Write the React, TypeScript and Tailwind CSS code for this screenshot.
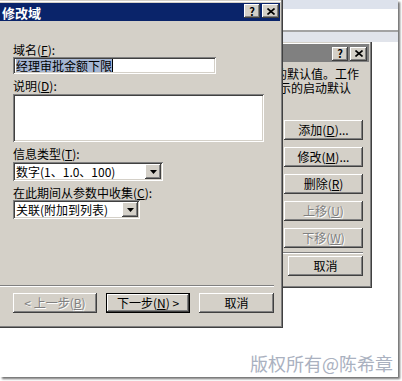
import React from 'react';

const raised =
    'bg-[#d4d0c8] shadow-[inset_-1px_-1px_#404040,inset_1px_1px_#ffffff,inset_-2px_-2px_#808080,inset_2px_2px_#d4d0c8]';
const sunken =
    'bg-white shadow-[inset_1px_1px_#808080,inset_-1px_-1px_#ffffff,inset_2px_2px_#404040,inset_-2px_-2px_#d4d0c8]';
const disabledText = 'text-[#808080] [text-shadow:1px_1px_#ffffff]';

const CaptionButtons: React.FC = () => (
    <div className="flex items-center gap-[2px] mt-[1px]">
        <div className={`${raised} w-[16px] h-[14px] flex items-center justify-center text-[11px] font-bold leading-none text-black`}>?</div>
        <div className={`${raised} w-[17px] h-[14px] flex items-center justify-center`}>
            <svg width="8" height="7" viewBox="0 0 8 7">
                <path d="M0.5 0.5L7.5 6.5M7.5 0.5L0.5 6.5" stroke="#000" strokeWidth="1.6" />
            </svg>
        </div>
    </div>
);

const Button: React.FC<{ children: React.ReactNode; w: string; disabled?: boolean; isDefault?: boolean }> = ({ children, w, disabled, isDefault }) => (
    <div
        className={`${w} h-[20px] flex items-center justify-center text-[12px] leading-none ${isDefault ? 'border border-black' : ''} ${
            disabled ? disabledText : 'text-black'
        } ${raised}`}
    >
        {children}
    </div>
);

const Combo: React.FC<{ text: string; w: string }> = ({ text, w }) => (
    <div className={`${sunken} ${w} h-[19px] flex items-center pl-[3px] pr-[2px]`}>
        <span className="flex-1 text-[12px] leading-none text-black whitespace-nowrap">{text}</span>
        <div className={`${raised} w-[16px] h-[15px] flex items-center justify-center`}>
            <svg width="7" height="4" viewBox="0 0 7 4">
                <path d="M0 0H7L3.5 4Z" fill="#000" />
            </svg>
        </div>
    </div>
);

const App: React.FC = () => {
    return (
        <div className="w-[402px] h-[381px] bg-white font-['Noto_Sans_CJK_SC','Noto_Sans',sans-serif]">
            <div className="relative w-[398px] h-[377px] overflow-hidden bg-white shadow-[2px_2px_2px_rgba(0,0,0,0.55)]">
                {/* window in the background */}
                <div className="absolute left-[283px] top-0 w-[115px] flex flex-col">
                    <div className="h-[9px] bg-[#dde2ec]" />
                    <div className="h-[21px] bg-white" />
                    <div className="h-[2px] bg-[#a3a3a3]" />
                    <div className="h-[10px] bg-[#e1e4eb]" />
                </div>

                {/* second dialog, behind */}
                <div className="absolute left-[200px] top-[42px] w-[172px] h-[246px] bg-[#d4d0c8] flex flex-col pt-[2px] pr-[3px] shadow-[inset_-1px_-1px_#404040,inset_-2px_-2px_#808080,inset_0_1px_#d4d0c8,inset_0_2px_#ffffff]">
                    <div className="h-[18px] bg-[#808080] flex justify-end pr-[2px]">
                        <CaptionButtons />
                    </div>
                    <p className="mt-[6px] pl-[51px] text-[12px] leading-[14px] text-black whitespace-nowrap font-['Liberation_Sans','Noto_Sans_CJK_SC',sans-serif]">
                        参数的默认值。工作
                        <br />
                        <span className="ml-[16px]">显示的启动默认</span>
                    </p>
                    <div className="mt-[24px] flex flex-col items-end pr-[6px] gap-[7px]">
                        <Button w="w-[79px]">添加(<u>D</u>)...</Button>
                        <Button w="w-[79px]">修改(<u>M</u>)...</Button>
                        <Button w="w-[79px]">删除(<u>R</u>)</Button>
                        <Button w="w-[79px]" disabled>上移(<u>U</u>)</Button>
                        <Button w="w-[79px]" disabled>下移(<u>W</u>)</Button>
                    </div>
                    <div className="mt-[4px] ml-[83px] mr-[6px] h-[2px] border-t border-[#808080] border-b border-b-white" />
                    <div className="mt-[2px] flex justify-end pr-[6px]">
                        <Button w="w-[75px]">取消</Button>
                    </div>
                </div>

                {/* main dialog */}
                <div className="absolute left-0 top-0 w-[283px] h-[328px] bg-[#d4d0c8] flex flex-col pt-[3px] pr-[3px] shadow-[inset_-1px_-1px_#404040,inset_-2px_-2px_#808080,inset_0_1px_#d4d0c8,inset_0_2px_#ffffff]">
                    <div className="h-[18px] bg-[#0a246a] flex items-start justify-between pr-[1px]">
                        <span className="pl-[2px] pt-[3px] text-[13px] leading-[13px] font-bold text-white">修改域</span>
                        <CaptionButtons />
                    </div>

                    <div className="flex flex-col pl-[13px] text-[12px] leading-[12px] text-black">
                        <div className="mt-[23px]">域名(<u>F</u>):</div>
                        <div className={`${sunken} mt-[1px] w-[203px] h-[17px] flex items-center pl-[3px]`}>
                            <span className="bg-[#a6b6d3] leading-[13px] whitespace-nowrap">经理审批金额下限</span>
                            <span className="w-[1px] h-[13px] bg-black" />
                        </div>
                        <div className="mt-[6px]">说明(<u>D</u>):</div>
                        <div className={`${sunken} mt-[2px] w-[251px] h-[48px]`} />
                        <div className="mt-[6px]">信息类型(<u>T</u>):</div>
                        <div className="mt-[2px]">
                            <Combo text="数字(1、1.0、100)" w="w-[150px]" />
                        </div>
                        <div className="mt-[6px]">在此期间从参数中收集(<u>C</u>):</div>
                        <div className="mt-[1px]">
                            <Combo text="关联(附加到列表)" w="w-[127px]" />
                        </div>
                    </div>

                    <div className="mt-auto mb-[41px] mr-[6px] h-[2px] border-t border-[#808080] border-b border-b-white" />
                    <div className="absolute left-[13px] top-[293px] flex gap-[9px]">
                        <Button w="w-[84px]" disabled>&lt; 上一步(<u>B</u>)</Button>
                        <Button w="w-[84px]" isDefault>下一步(<u>N</u>) &gt;</Button>
                        <Button w="w-[75px]">取消</Button>
                    </div>
                </div>

                {/* watermark */}
                <div className="absolute left-[250px] top-[352px] text-[18px] leading-[22px] text-[#aab1c0] whitespace-nowrap">
                    版权所有@陈希章
                </div>
            </div>
        </div>
    );
};

export default App;
